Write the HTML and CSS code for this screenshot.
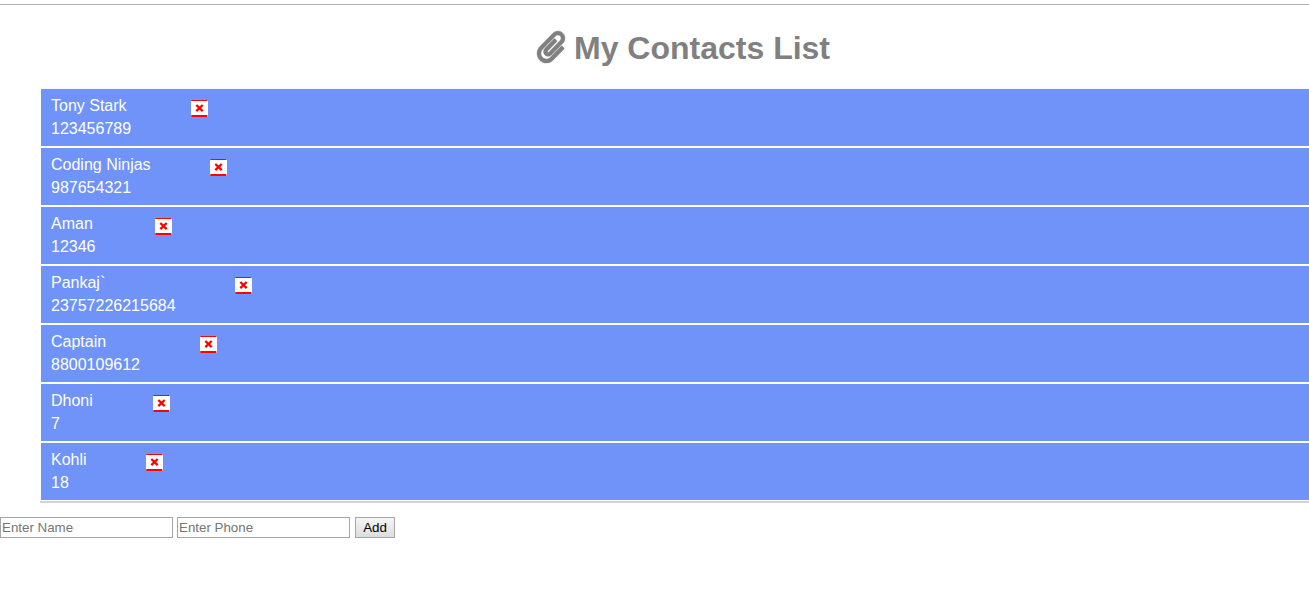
FILE: index.html
```html
<!DOCTYPE html>
<html lang="en">
<head>
<meta charset="utf-8">
<title>My Contacts List</title>
<link rel="stylesheet" href="styles.css">
</head>
<body>
<hr class="rule">
<h1 class="title"><svg class="clip" viewBox="0 0 448 512"><path fill="currentColor" stroke="currentColor" stroke-width="6" d="M43.246 466.142c-58.43-60.289-57.341-157.511 1.386-217.581L254.392 34c44.316-45.332 116.351-45.336 160.671 0 43.89 44.894 43.943 117.329 0 162.276L232.214 383.128c-29.855 30.537-78.633 30.111-107.982-.998-28.275-29.97-27.368-77.473 1.452-106.953l143.743-146.835c6.182-6.314 16.312-6.422 22.626-.241l22.861 22.379c6.315 6.182 6.422 16.312.241 22.626L171.427 319.927c-4.932 5.045-5.236 13.428-.648 18.292 4.372 4.634 11.245 4.711 15.688.165l182.849-186.851c19.613-20.062 19.613-52.725-.011-72.798-19.189-19.627-49.957-19.637-69.154 0L90.39 293.295c-34.763 35.56-35.299 93.12-1.191 128.313 34.01 35.093 88.985 35.137 123.058.286l172.06-175.999c6.177-6.319 16.307-6.433 22.626-.256l22.877 22.364c6.319 6.177 6.434 16.307.256 22.626l-172.06 175.998c-59.576 60.938-155.943 60.216-214.77-.485z"/></svg><span class="title-text">My Contacts List</span></h1>
<svg width="0" height="0" class="defs"><symbol id="close" viewBox="0 0 17 17"><rect width="17" height="17" rx="1.5" fill="#fff"/><path d="M.3 0h16v1H.3zM.3 15h16v2H.3z" fill="#f00"/><path d="M5.3 5l6.4 6.2M11.7 5l-6.4 6.2" stroke="#f00" stroke-width="2.3"/></symbol></svg>
<ul class="contacts">
<li class="contact"><div class="info"><p>Tony Stark</p><p>123456789</p></div><svg class="close"><use href="#close"/></svg></li>
<li class="contact"><div class="info"><p>Coding Ninjas</p><p>987654321</p></div><svg class="close"><use href="#close"/></svg></li>
<li class="contact"><div class="info"><p>Aman</p><p>12346</p></div><svg class="close"><use href="#close"/></svg></li>
<li class="contact"><div class="info"><p>Pankaj`</p><p>23757226215684</p></div><svg class="close"><use href="#close"/></svg></li>
<li class="contact"><div class="info"><p>Captain</p><p>8800109612</p></div><svg class="close"><use href="#close"/></svg></li>
<li class="contact"><div class="info"><p>Dhoni</p><p>7</p></div><svg class="close"><use href="#close"/></svg></li>
<li class="contact"><div class="info"><p>Kohli</p><p>18</p></div><svg class="close"><use href="#close"/></svg></li>
</ul>
<form class="add-form">
<input class="field" type="text" placeholder="Enter Name">
<input class="field" type="text" placeholder="Enter Phone">
<button class="add" type="button">Add</button>
</form>
</body>
</html>
```
FILE: styles.css
```css
* { box-sizing: border-box; }
body {
  margin: 0;
  padding-top: 4px;
  overflow: hidden;
  background: #fff;
  font-family: "Liberation Sans", Arial, sans-serif;
}
.rule { margin: 0; border: 0; height: 1px; background: #b0b0b0; }
.title {
  display: flex;
  align-items: center;
  justify-content: center;
  gap: 9px;
  margin: 0;
  height: 83px;
  padding: 0 0 0 58px;
  font-size: 32px;
  line-height: 37px;
  color: #808080;
}
.title-text { margin-top: 3px; }
.clip { width: 28px; height: 32px; overflow: visible; }
.defs { display: block; }
.contacts {
  margin: 0 0 0 40px;
  padding: 0 0 0 1px;
  list-style: none;
  border-top: 1px solid #f7f7f7;
  border-left: 0;
  border-bottom: 2px solid #d3d3d3;
}
.contact {
  display: flex;
  align-items: flex-start;
  height: 57px;
  margin-bottom: 2px;
  padding: 5px 10px 0;
  background: #6f93f8;
  color: #fff;
}
.contact:last-child { margin-bottom: 1px; }
.info p { margin: 0; font-size: 16px; line-height: 23px; }
.close { flex: none; width: 17px; height: 17px; margin: 6px 0 0 59.8px; }
.add-form { display: flex; gap: 4px; margin-top: 14px; }
.field {
  width: 173px;
  height: 21px;
  padding: 1px;
  border: 1px solid #a6a6a6;
  border-radius: 0;
  font: 13.333px "Liberation Sans", Arial, sans-serif;
}
.field::placeholder { color: #757575; }
.add {
  width: 40px;
  height: 21px;
  margin-left: 1px;
  padding: 0;
  border: 1px solid #a6a6a6;
  border-radius: 0;
  background: linear-gradient(#f5f5f5, #dddddd);
  color: #000;
  font: 13.333px "Liberation Sans", Arial, sans-serif;
}
```
